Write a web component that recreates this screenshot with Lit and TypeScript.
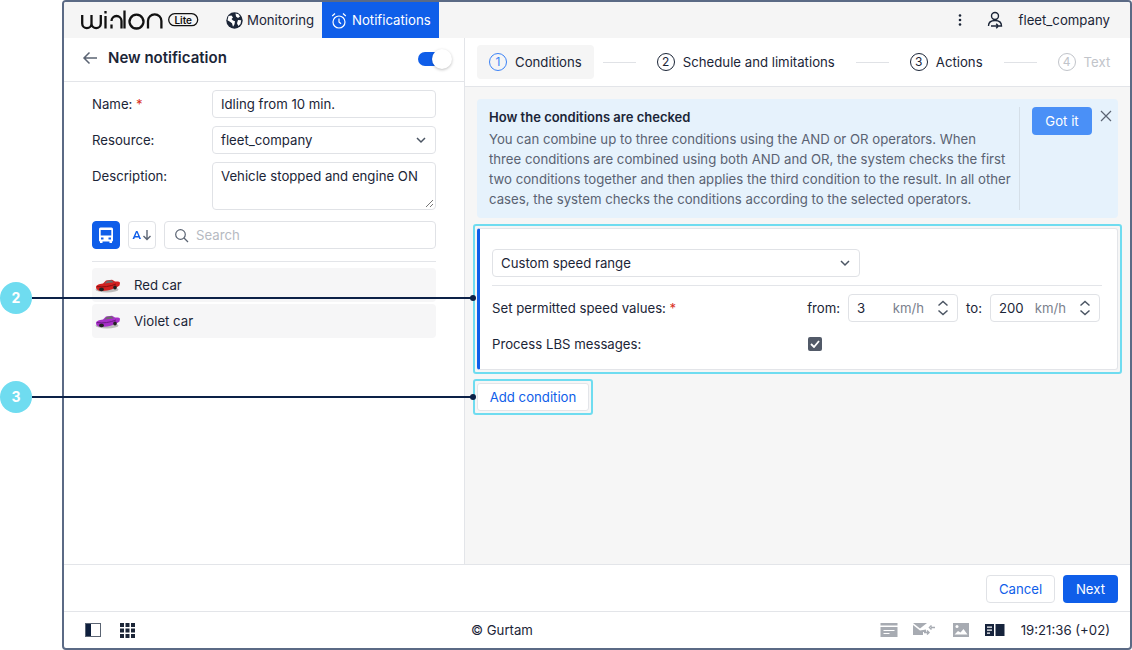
import { LitElement, html, css } from "lit";
import { customElement } from "lit/decorators.js";

const chevron = html`<svg class="chev" width="12" height="8" viewBox="0 0 12 8"><path d="M2 2l4 4 4-4" fill="none" stroke="#4b5563" stroke-width="1.500"/></svg>`;
const spin = html`<svg class="spin" width="12" height="18" viewBox="0 0 12 18"><path d="M1.500 6.500L6 2.500l4.500 4M1.500 11.500L6 15.500l4.500-4" fill="none" stroke="#4b5563" stroke-width="1.500"/></svg>`;
const car = (body: string, dark: string) => html`<svg width="26" height="16" viewBox="0 0 26 16"><ellipse cx="12" cy="12.500" rx="11.500" ry="3" fill="#8a8a8a" opacity=".55"/><path d="M1 10C1 8 4 7 8 6.500L11 3.500 17 2.800 20 4.500C22.500 4.300 25 4.500 25 6L24.500 8.500C21 11 14 14 7 14 3.500 14 1 12.500 1 10Z" fill="${body}"/><path d="M9.500 6.500L12 3.800 16.500 3.300 18.800 5.200Z" fill="#6b6b6b"/><ellipse cx="6.500" cy="12.300" rx="2.400" ry="1.900" fill="#222"/><ellipse cx="20" cy="10.500" rx="1.800" ry="1.900" fill="#222"/><path d="M2 9.500C8 10.500 15 9.500 21 7" stroke="${dark}" fill="none"/></svg>`;

@customElement("app-root")
export class AppRoot extends LitElement {
  static styles = css`
    :host { display: block; position: relative; width: 1132px; height: 650px; background: #fff; overflow: hidden; font: 13.2px/20px Inter, "Liberation Sans", sans-serif; color: #1b2537; box-sizing: border-box; padding-left: 62px; }
    * { box-sizing: border-box; }
    .win { height: 650px; width: 1070px; border: 2px solid #5b6a85; border-radius: 4px; display: flex; flex-direction: column; overflow: hidden; background: #fff; }
    .top { height: 36px; flex: none; background: #f5f5f5; display: flex; align-items: stretch; }
    .logo { width: 150px; display: flex; align-items: center; padding-left: 17px; gap: 6px; }
    .tab { display: flex; align-items: center; }
    .mon { width: 108px; padding-left: 12px; gap: 4px; }
    .not { background: #0f5ee9; color: #fff; width: 117px; padding-left: 9px; gap: 5px; }
    .spacer { flex: 1; }
    .user { display: flex; align-items: center; padding-right: 20px; }
    .user .dots { margin-right: 24px; }
    .user .name { margin-left: 15px; }
    .main { flex: 1; display: flex; min-height: 0; }
    .left { width: 401px; flex: none; border-right: 1px solid #e3e5e9; display: flex; flex-direction: column; }
    .lhead { height: 44px; flex: none; border-bottom: 1px solid #e3e5e9; display: flex; align-items: center; padding: 0 12px 3px 18px; }
    .lhead b { font-size: 15px; font-weight: 600; margin-left: 10px; flex: 1; }
    .toggle { position: relative; width: 34px; height: 20px; top: 1px; }
    .toggle i { position: absolute; left: 0; top: 3px; width: 24px; height: 14px; border-radius: 7px; background: #0f5ee9; }
    .toggle u { position: absolute; right: 0; top: 0; width: 20px; height: 20px; border-radius: 50%; background: #fff; box-shadow: 0 1px 3px rgba(0,0,0,.25); }
    .form { padding: 8px 28px 0; display: grid; grid-template-columns: 120px 224px; row-gap: 8px; }
    .form label { line-height: 28px; }
    .req { color: #d92d20; }
    .field { height: 28px; border: 1px solid #e0e2e6; border-radius: 4px; background: #fff; padding: 0 8px; display: flex; align-items: center; justify-content: space-between; white-space: nowrap; }
    .area { height: 48px; align-items: flex-start; padding-top: 3px; position: relative; }
    .area svg { position: absolute; right: 1px; bottom: 1px; }
    .tools { margin: 11px 28px 0; padding-bottom: 12px; border-bottom: 1px solid #e3e5e9; display: flex; gap: 8px; }
    .ib { width: 28px; height: 28px; border-radius: 4px; border: 1px solid #e0e2e6; display: flex; align-items: center; justify-content: center; }
    .ib.on { background: #0f5ee9; border-color: #0f5ee9; }
    .search { flex: 1; height: 28px; border: 1px solid #e0e2e6; border-radius: 4px; display: flex; align-items: center; gap: 7px; padding: 0 9px; color: #b6bac2; }
    .list { margin: 6px 28px 0; display: flex; flex-direction: column; gap: 2px; }
    .row { height: 34px; background: #f6f6f7; border-radius: 4px; display: flex; align-items: center; padding-left: 3px; gap: 13px; }
    .right { flex: 1; background: #f6f6f6; display: flex; flex-direction: column; min-width: 0; }
    .steps { height: 49px; flex: none; background: #fff; border-bottom: 1px solid #e3e5e9; display: flex; align-items: center; padding-left: 12px; }
    .step { display: flex; align-items: center; gap: 8px; height: 34px; padding: 0 12px; border-radius: 4px; white-space: nowrap; }
    .step.cur { background: #f5f5f5; }
    .num { width: 18px; height: 18px; border: 1px solid currentColor; border-radius: 50%; display: flex; align-items: center; justify-content: center; font-size: 12px; line-height: 1; flex: none; }
    .cur .num { color: #3b82f6; }
    .off { color: #c1c4ca; }
    .line { width: 33px; height: 1px; background: #e0e2e6; margin: 0 9px; }
    .info { margin: 12px 12px 0 12px; height: 119px; background: #e6f2fc; border-radius: 4px; display: flex; padding: 8px 0 8px 12px; }
    .info .txt { width: 531px; padding-right: 8px; border-right: 1px solid #d5dfe8; flex: none; }
    .info h4 { margin: 0; font-size: 13px; font-weight: 600; line-height: 20px; }
    .info p { margin: 2px 0 0; color: #5a6272; line-height: 20px; }
    .got { width: 60px; height: 28px; border-radius: 4px; background: #4a90f7; color: #fff; display: flex; align-items: center; justify-content: center; margin-left: 12px; }
    .x { margin: 3px 0 0 8px; }
    .hl { border: 2px solid #6fdcf0; border-radius: 3px; }
    .cond { margin: 6px 8px 0 8px; height: 150px; padding: 2px; }
    .card { height: 142px; margin-top: 0; background: #fff; border: 1px solid #e3e5e9; border-left: 3px solid #0f5ee9; border-radius: 3px; padding: 20px 15px 0 12px; }
    .sel { width: 368px; }
    .card hr { border: 0; height: 1px; background: #e3e5e9; margin: 8px 0 0; }
    .speed { display: flex; align-items: center; margin-top: 8px; height: 28px; }
    .speed .sp { flex: 1; }
    .num-in { width: 110px; height: 28px; border: 1px solid #e0e2e6; border-radius: 4px; display: flex; align-items: center; padding: 0 8px; margin: 0 8px; }
    .num-in.r { margin-right: 2px; }
    .num-in span { flex: 1; }
    .num-in em { font-style: normal; color: #7b818d; margin-right: 13px; }
    .lbs { display: flex; align-items: center; height: 28px; margin-top: 8px; }
    .lbs span { width: 316px; }
    .lbs .cb { width: 14px; height: 14px; border-radius: 2px; background: #525a68; display: flex; align-items: center; justify-content: center; }
    .addw { margin: 5px 0 0 8px; width: 120px; height: 36px; padding: 2px; }
    .add { height: 28px; background: #fff; border: 1px solid #e3e5e9; border-radius: 3px; color: #0f5ee9; display: flex; align-items: center; justify-content: center; }
    .foot { height: 47px; flex: none; border-top: 1px solid #e3e5e9; display: flex; align-items: center; justify-content: flex-end; padding: 2px 12px 0 0; gap: 8px; }
    .btn { height: 28px; border-radius: 4px; display: flex; align-items: center; justify-content: center; }
    .cancel { width: 69px; border: 1px solid #e0e2e6; color: #0f5ee9; }
    .next { width: 55px; background: #0f5ee9; color: #fff; }
    .status { height: 37px; flex: none; border-top: 1px solid #e3e5e9; display: flex; align-items: center; padding: 0 20px 0 21px; }
    .status .l { width: 386px; display: flex; align-items: center; gap: 19px; }
    .status .c { flex: 1; }
    .status .r { display: flex; align-items: center; }
    .gi1 { margin-right: 15px; }
    .gi2 { margin-right: 17px; }
    .gi3 { margin-right: 16px; }
    .ball { position: absolute; left: 0; width: 32px; height: 32px; border-radius: 50%; background: #6fdcf0; color: #fff; font-weight: 700; font-size: 14px; display: flex; align-items: center; justify-content: center; }
    .wire { position: absolute; left: 32px; height: 2px; width: 442px; background: #0c2147; }
    .dot { position: absolute; right: -2px; top: -2px; width: 6px; height: 6px; border-radius: 50%; background: #0c2147; }
  `;

  render() {
    return html`
      <div class="win">
        <div class="top">
          <div class="logo">
            <svg width="82" height="20" viewBox="0 0 82 20" fill="none" stroke="#111" stroke-width="2.300"><path d="M1.200 5v8.500a4.650 4.650 0 0 0 9.300 0V5v8.500a4.650 4.650 0 0 0 9.300 0V5M24.500 6v12.500M24.500 1v2.500M30.500 11a5 5 0 0 1 10 0v7.500M30.500 14.500v4M43.500.5v18M55.500 4.700a6.900 6.900 0 1 0 .01 0ZM67 18.500V11a6.700 6.700 0 0 1 13.400 0v7.500"/></svg>
            <svg style="margin-left:-2px" width="33" height="16" viewBox="0 0 33 16"><rect x="1.700" y="1.700" width="29" height="12" rx="6" fill="none" stroke="#111" stroke-width="1.300"/><text x="16.200" y="11.500" text-anchor="middle" font-family="Inter" font-size="10" font-weight="600" fill="#111">Lite</text></svg>
          </div>
          <div class="tab mon">
            <svg width="17" height="17" viewBox="0 0 17 17"><circle cx="8.500" cy="8.500" r="8.200" fill="#1b2537"/><path d="M2.500 4l3-.5 1.500 2-1.500 1.500 1.500 1.500 2 .8-.5 3-1.500 2.500-1-3.500-2-1.500-2.500-1.500ZM9.500 1.500l3 .8 1.500 2.200-2 1.500-2-1.500ZM12 8l3.200.3-.7 3.700-2.200 2-1.300-2.800Z" fill="#fff"/></svg>
            <span>Monitoring</span>
          </div>
          <div class="tab not">
            <svg width="16" height="17" viewBox="0 0 16 17" fill="none" stroke="#fff" stroke-width="1.200"><circle cx="8" cy="10" r="6"/><path d="M8 6.500V10l2 1.800M1.200 4L4 1.500M14.800 4L12 1.500"/></svg>
            <span>Notifications</span>
          </div>
          <div class="spacer"></div>
          <div class="user">
            <svg class="dots" width="4" height="14" viewBox="0 0 4 14" fill="#1b2537"><circle cx="2" cy="2.500" r="1.300"/><circle cx="2" cy="7" r="1.300"/><circle cx="2" cy="11.500" r="1.300"/></svg>
            <svg width="18" height="18" viewBox="0 0 18 18" fill="none" stroke="#1b2537" stroke-width="1.400"><circle cx="9" cy="5" r="3.500"/><path d="M2.500 15c0-3.500 2.500-5.500 6.500-5.500s6.500 2 6.500 5.500H13M5 15h1"/><path d="M6 15h6M10.200 12.800l2.200 2.200-2.200 2.200"/></svg>
            <span class="name">fleet_company</span>
          </div>
        </div>
        <div class="main">
          <div class="left">
            <div class="lhead">
              <svg width="16" height="14" viewBox="0 0 16 14" fill="none" stroke="#5b6473" stroke-width="1.500"><path d="M15 7H2M7.500 1.500L2 7l5.500 5.500"/></svg>
              <b>New notification</b>
              <div class="toggle"><i></i><u></u></div>
            </div>
            <div class="form">
              <label>Name: <span class="req">*</span></label><div class="field">Idling from 10 min.</div>
              <label>Resource:</label><div class="field">fleet_company ${chevron}</div>
              <label>Description:</label>
              <div class="field area">Vehicle stopped and engine ON<svg width="9" height="9" viewBox="0 0 9 9" stroke="#777"><path d="M8 1L1 8M8 5L5 8"/></svg></div>
            </div>
            <div class="tools">
              <div class="ib on"><svg width="18" height="18" viewBox="0 0 18 18" fill="#fff"><path fill-rule="evenodd" d="M3.500 1.500h11A1.500 1.500 0 0 1 16 3v11.500a1 1 0 0 1-1 1v1.500h-2.500v-1.500h-7V17H3v-1.500a1 1 0 0 1-1-1V3a1.500 1.500 0 0 1 1.500-1.500ZM3.700 4v5.500h10.600V4ZM4 11.500v2h2.500v-2Zm7.500 0v2H14v-2Z"/></svg></div>
              <div class="ib"><svg width="20" height="14" viewBox="0 0 20 14"><path d="M.5 11L4 3h1.500L9 11H7.300l-.6-1.600H2.900L2.200 11Zm2.900-3h2.800L4.800 4.500Z" fill="#0f5ee9"/><path d="M15 2v9.500M11.500 8l3.500 3.500L18.500 8" fill="none" stroke="#5b6473" stroke-width="1.400"/></svg></div>
              <div class="search"><svg width="15" height="15" viewBox="0 0 15 15" fill="none" stroke="#5b6473" stroke-width="1.200"><circle cx="6.500" cy="6.500" r="4.800"/><path d="M10 10l4 4"/></svg>Search</div>
            </div>
            <div class="list">
              <div class="row">${car("#d32020", "#8a1010")}<span>Red car</span></div>
              <div class="row">${car("#a62fc8", "#6c1d85")}<span>Violet car</span></div>
            </div>
          </div>
          <div class="right">
            <div class="steps">
              <div class="step cur"><span class="num">1</span>Conditions</div>
              <div class="line"></div>
              <div class="step"><span class="num">2</span>Schedule and limitations</div>
              <div class="line"></div>
              <div class="step"><span class="num">3</span>Actions</div>
              <div class="line"></div>
              <div class="step off"><span class="num">4</span>Text</div>
            </div>
            <div class="info">
              <div class="txt">
                <h4>How the conditions are checked</h4>
                <p>You can combine up to three conditions using the AND or OR operators. When three conditions are combined using both AND and OR, the system checks the first two conditions together and then applies the third condition to the result. In all other cases, the system checks the conditions according to the selected operators.</p>
              </div>
              <div class="got">Got it</div>
              <svg class="x" width="12" height="12" viewBox="0 0 12 12" stroke="#5b6473" stroke-width="1.200"><path d="M1 1l10 10M11 1L1 11"/></svg>
            </div>
            <div class="cond hl">
              <div class="card">
                <div class="field sel">Custom speed range ${chevron}</div>
                <hr />
                <div class="speed">
                  <span>Set permitted speed values: <span class="req">*</span></span>
                  <span class="sp"></span>
                  from:
                  <div class="num-in"><span>3</span><em>km/h</em>${spin}</div>
                  to:
                  <div class="num-in r"><span>200</span><em>km/h</em>${spin}</div>
                </div>
                <div class="lbs"><span>Process LBS messages:</span>
                  <div class="cb"><svg width="10" height="8" viewBox="0 0 10 8" fill="none" stroke="#fff" stroke-width="1.800"><path d="M1 4l3 3 5-6"/></svg></div>
                </div>
              </div>
            </div>
            <div class="addw hl"><div class="add">Add condition</div></div>
          </div>
        </div>
        <div class="foot">
          <div class="btn cancel">Cancel</div>
          <div class="btn next">Next</div>
        </div>
        <div class="status">
          <div class="l">
            <svg width="16" height="14" viewBox="0 0 16 14"><rect x=".5" y=".5" width="15" height="13" fill="#fff" stroke="#5b6473"/><rect x="1" y="1" width="5" height="12" fill="#0e1f3d"/></svg>
            <svg width="15" height="15" viewBox="0 0 15 15" fill="#1b2537"><rect width="4" height="4"/><rect x="5.500" width="4" height="4"/><rect x="11" width="4" height="4"/><rect y="5.500" width="4" height="4"/><rect x="5.500" y="5.500" width="4" height="4"/><rect x="11" y="5.500" width="4" height="4"/><rect y="11" width="4" height="4"/><rect x="5.500" y="11" width="4" height="4"/><rect x="11" y="11" width="4" height="4"/></svg>
          </div>
          <div class="c">© Gurtam</div>
          <div class="r">
            <svg class="gi1" width="18" height="14" viewBox="0 0 18 14"><path fill-rule="evenodd" d="M.5 0h17v14H.500ZM.5 2.500V4h17V2.500ZM3.500 7v1h11V7ZM3.500 10v1h6v-1Z" fill="#a7abb2"/></svg>
            <svg class="gi2" width="23" height="14" viewBox="0 0 23 14" fill="#a7abb2"><path d="M0 0h14L7 5.500ZM0 2v10h10V9h3V6.500L7 7.500Z"/><path d="M22 4.500h-4M18.500 2.500l-2 2 2 2M11 9.500h4.500M14 7.500l2 2-2 2" fill="none" stroke="#a7abb2" stroke-width="1.500"/></svg>
            <svg class="gi3" width="16" height="14" viewBox="0 0 16 14"><path fill-rule="evenodd" d="M0 0h16v14H0ZM1.500 11.500h13L10.500 6 7.500 9.500 5 8Z" fill="#a7abb2"/><circle cx="4" cy="3.500" r="1.500" fill="#fff"/></svg>
            <svg class="gi3" width="20" height="12" viewBox="0 0 20 12"><path fill-rule="evenodd" d="M0 0h9v12H0ZM2 2.500v1.200h5V2.500ZM2 5.500v1.200h5V5.500ZM2 8.500v1.200h3V8.500Z" fill="#16233c"/><rect x="10.500" width="9" height="12" fill="#16233c"/></svg>
            <span>19:21:36 (+02)</span>
          </div>
        </div>
      </div>
      <div class="ball" style="top:282px">2</div>
      <div class="wire" style="top:297px"><span class="dot"></span></div>
      <div class="ball" style="top:381px">3</div>
      <div class="wire" style="top:396px"><span class="dot"></span></div>
    `;
  }
}
